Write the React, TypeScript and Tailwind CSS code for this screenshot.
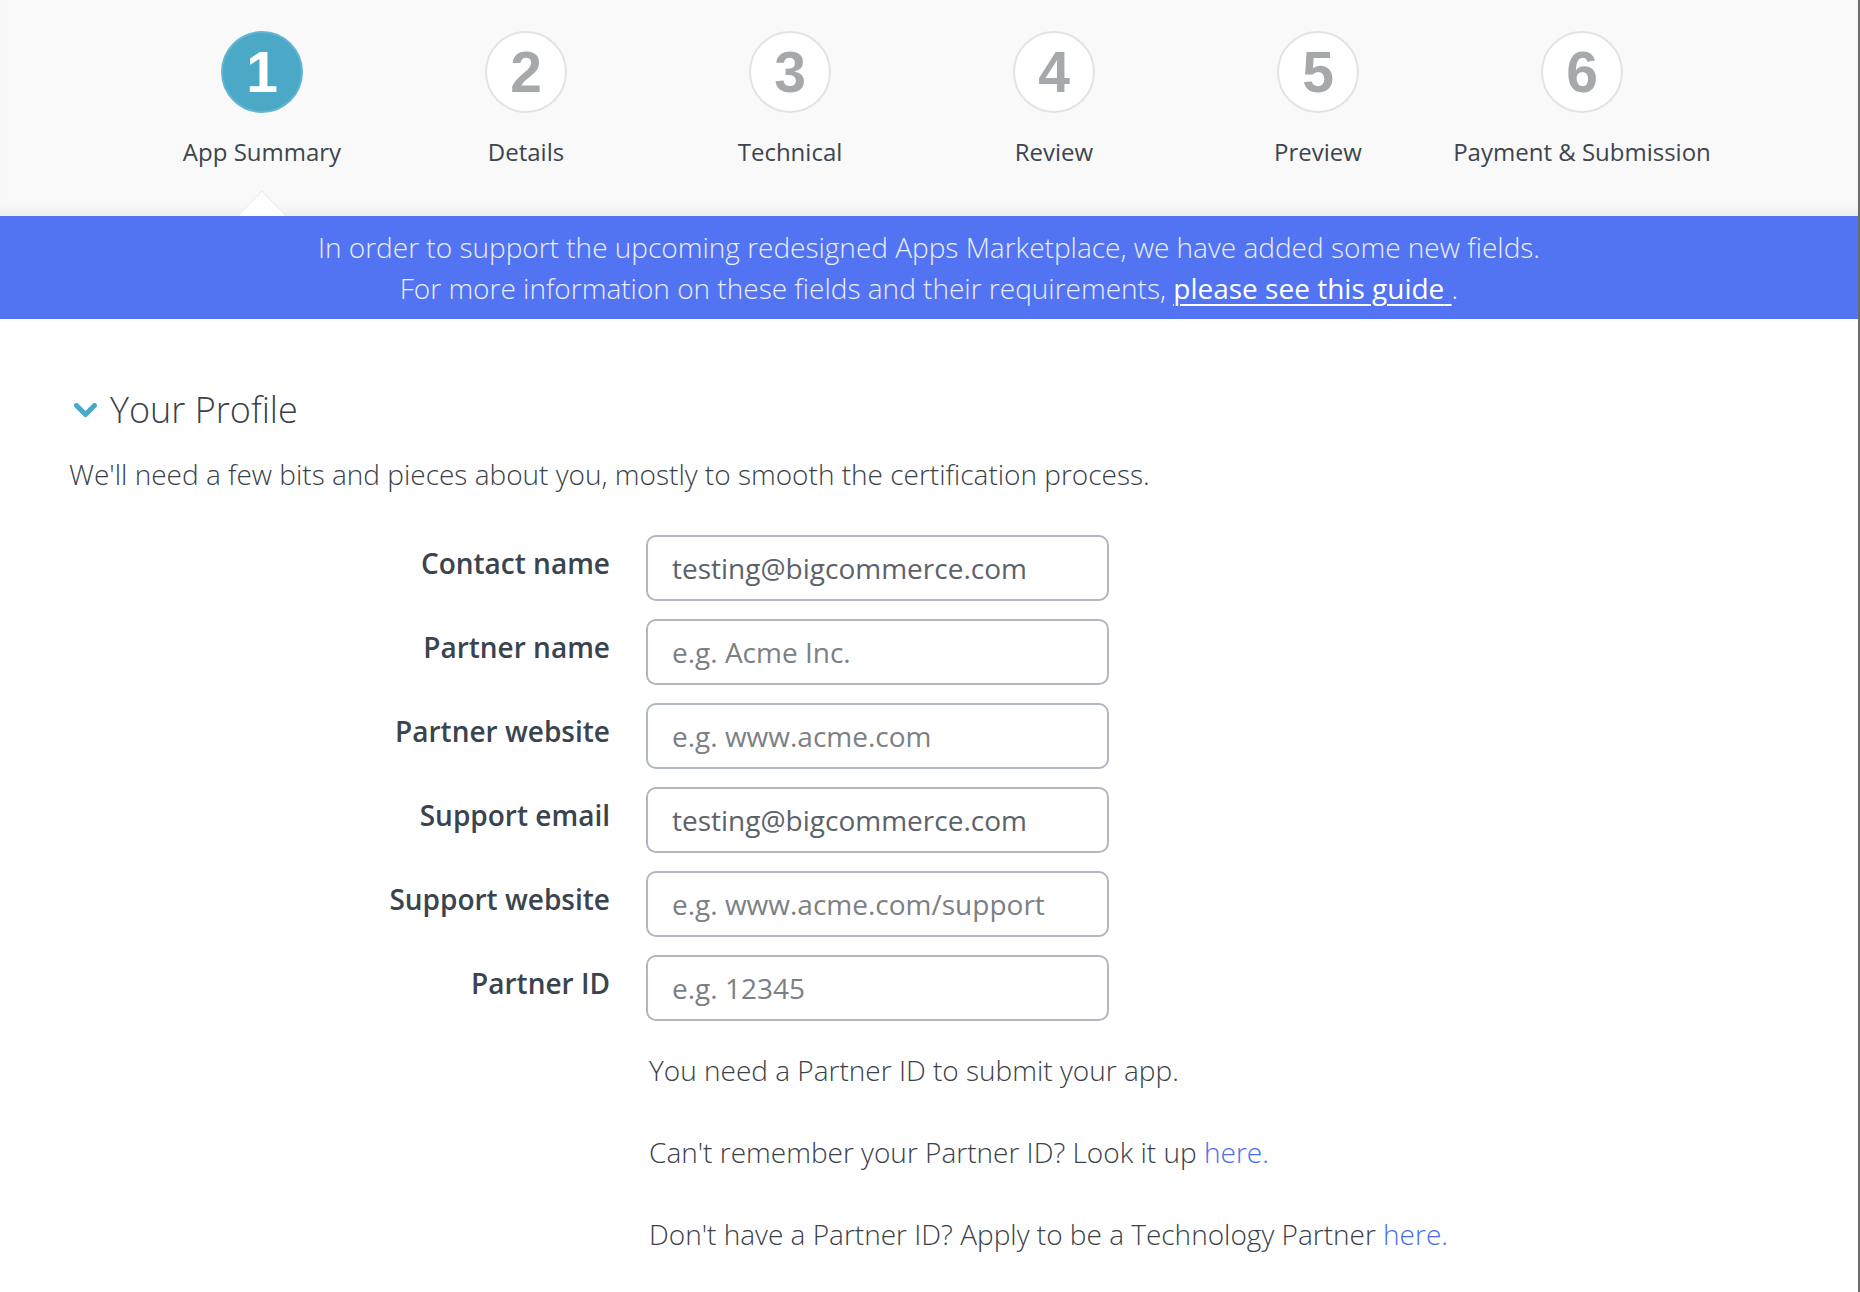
import React from 'react';

const steps = ['App Summary', 'Details', 'Technical', 'Review', 'Preview', 'Payment & Submission'];

const fields = [
  { label: 'Contact name', value: 'testing@bigcommerce.com', placeholder: '' },
  { label: 'Partner name', value: '', placeholder: 'e.g. Acme Inc.' },
  { label: 'Partner website', value: '', placeholder: 'e.g. www.acme.com' },
  { label: 'Support email', value: 'testing@bigcommerce.com', placeholder: '' },
  { label: 'Support website', value: '', placeholder: 'e.g. www.acme.com/support' },
  { label: 'Partner ID', value: '', placeholder: 'e.g. 12345' },
];

const Stepper: React.FC = () => (
  <div className="relative h-[216px] bg-[#f9f9f9] shadow-[inset_0_-14px_18px_-14px_rgba(0,0,0,0.09)] flex pl-[130px] pt-[31px]">
    {steps.map((label, i) => {
      const active = i === 0;
      return (
        <div key={label} className="w-[264px] flex flex-col items-center">
          <div
            className={`w-[82px] h-[82px] rounded-full flex items-center justify-center border-2 font-['Liberation_Sans',Arial,sans-serif] font-bold text-[57px] leading-none ${
              active ? 'bg-[#4ba9c7] border-[#63b6d1] text-white' : 'bg-white border-[#e3e3e3] text-[#a6a9ac]'
            }`}
          >
            {i + 1}
          </div>
          <div className="mt-[22px] text-[24px] leading-[34px] text-[#3d454d]">{label}</div>
        </div>
      );
    })}
    {/* pointer under the active step */}
    <svg className="absolute bottom-0 left-[238px]" width="48" height="26" viewBox="0 0 48 26">
      <path d="M0 26 L24 1 L48 26 Z" fill="#ffffff" />
      <path d="M0 26 L24 1 L48 26" fill="none" stroke="#e6e6e6" strokeWidth="1" />
    </svg>
  </div>
);

const Banner: React.FC = () => (
  <div className="h-[103px] bg-[#5274f2] flex flex-col items-center justify-center text-[28px] leading-[41px] font-light text-[#ebedf7]">
    <p>In order to support the upcoming redesigned Apps Marketplace, we have added some new fields.</p>
    <p>
      For more information on these fields and their requirements,{' '}
      <a href="#" className="text-white font-normal underline underline-offset-[5px] decoration-2">
        please see this guide{' '}
      </a>
      .
    </p>
  </div>
);

export default function App() {
  return (
    <div className="min-h-screen bg-white border-r-2 border-[#6b6b6b] font-['Open_Sans',sans-serif] text-[#3d454d]">
      <Stepper />
      <Banner />

      <div className="px-[69px] pb-[40px]">
        <div className="mt-[67px] flex items-center">
          <svg className="ml-[5px]" width="23" height="15" viewBox="0 0 23 15">
            <path d="M2.5 2.5 L11.5 11.5 L20.5 2.5" fill="none" stroke="#4aa8c7" strokeWidth="5" strokeLinecap="round" strokeLinejoin="round" />
          </svg>
          <h2 className="ml-[13px] text-[36px] leading-[48px] font-light text-[#3a4148]">Your Profile</h2>
        </div>

        <p className="mt-[22px] text-[28px] leading-[36px] font-light text-[#3a4148]">
          We'll need a few bits and pieces about you, mostly to smooth the certification process.
        </p>

        <div className="mt-[43px] flex flex-col gap-[18px]">
          {fields.map((f) => (
            <div key={f.label} className="flex items-start">
              <label className="w-[541px] pt-[10px] text-right text-[28px] leading-[36px] font-semibold text-[#3a444e]">
                {f.label}
              </label>
              <input
                type="text"
                defaultValue={f.value}
                placeholder={f.placeholder}
                className="ml-[36px] w-[463px] h-[66px] rounded-[10px] border-2 border-[#b0b7be] bg-white px-[24px] text-[28px] text-[#5d6268] placeholder:text-[#7c8085] outline-none"
              />
            </div>
          ))}
        </div>

        <div className="ml-[580px] mt-[31px] flex flex-col gap-[46px] text-[28px] leading-[36px] font-light text-[#3a4148]">
          <p>You need a Partner ID to submit your app.</p>
          <p>
            Can't remember your Partner ID? Look it up <a href="#" className="text-[#4a6cf2]">here.</a>
          </p>
          <p>
            Don't have a Partner ID? Apply to be a Technology Partner <a href="#" className="text-[#4a6cf2]">here.</a>
          </p>
        </div>
      </div>
    </div>
  );
}
